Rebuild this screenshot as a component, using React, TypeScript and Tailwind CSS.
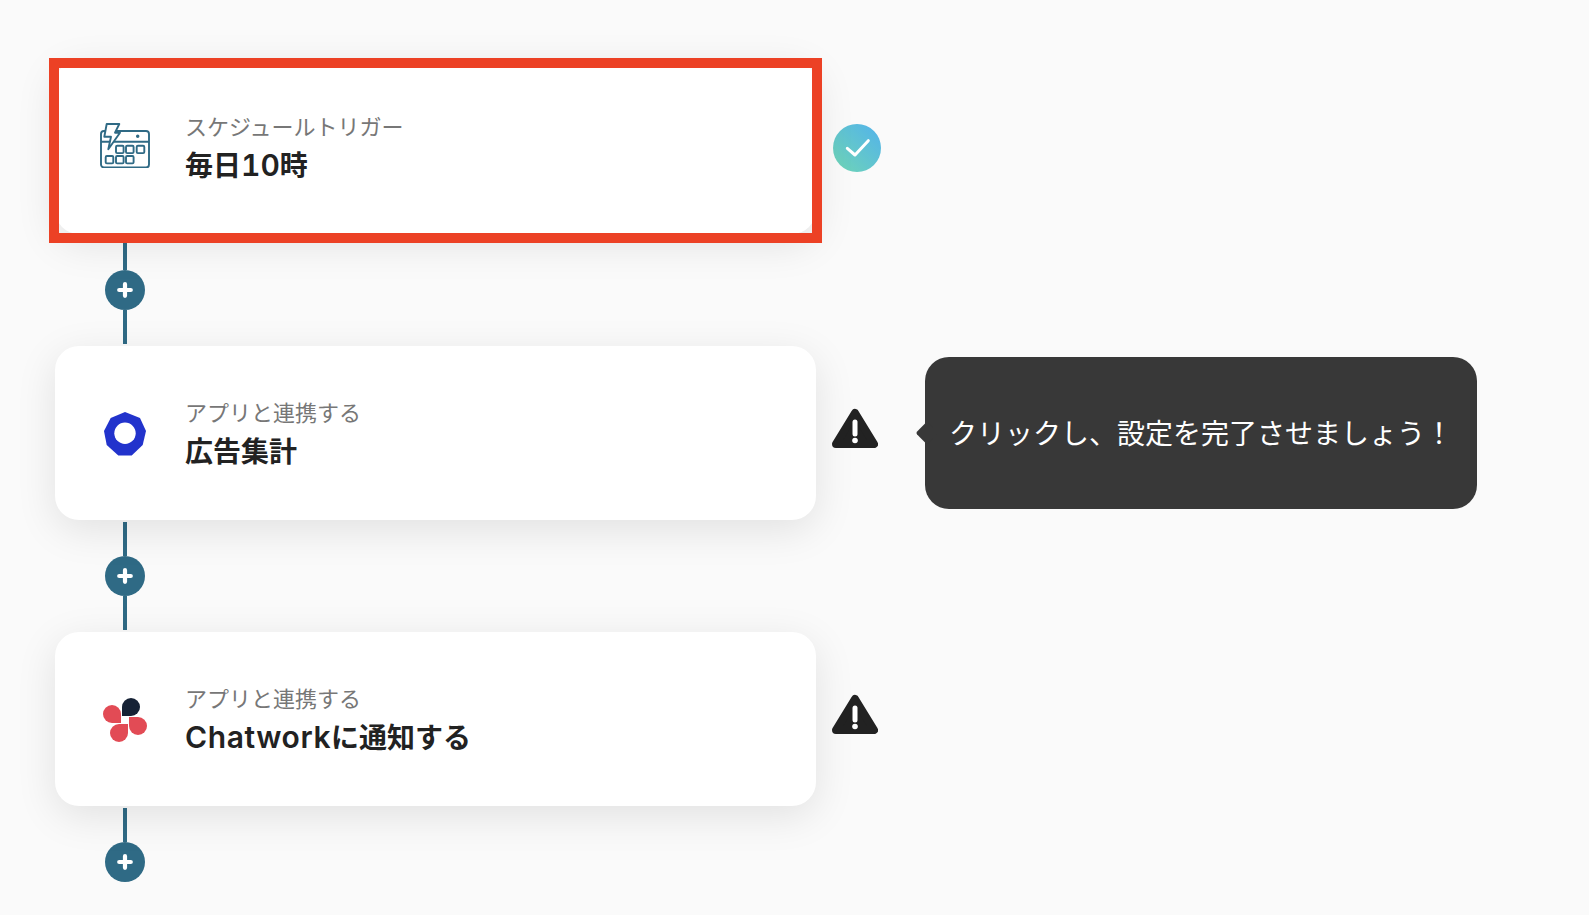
const cardFont = "font-['Inter','Noto_Sans_CJK_JP',sans-serif]";

function CalendarIcon() {
  return (
    <svg className="-mt-1" width="50" height="46" viewBox="0 0 50 46" fill="none" stroke="#2f6a85" strokeWidth="1.9" strokeLinejoin="round">
      <rect x="1" y="9" width="48" height="36.5" rx="3" />
      <path d="M1 19.7H49" />
      <circle cx="37.7" cy="14.3" r="0.8" fill="#2f6a85" />
      <rect x="16" y="23.7" width="7.6" height="7.4" rx="1.2" />
      <rect x="26" y="23.7" width="7.6" height="7.4" rx="1.2" />
      <rect x="36.7" y="23.7" width="7.6" height="7.4" rx="1.2" />
      <rect x="5.7" y="34" width="7.6" height="7.4" rx="1.2" />
      <rect x="16" y="34" width="7.6" height="7.4" rx="1.2" />
      <rect x="26" y="34" width="7.6" height="7.4" rx="1.2" />
      <path d="M6.7 2H19.3L15 10.7H20L8.3 27.3L11 14.7H4.3Z" fill="#fff" />
    </svg>
  );
}

function AdIcon() {
  return (
    <svg className="mt-[2px]" width="42" height="44" viewBox="0 0 42 44">
      <polygon points="21,0 36,6 42,19 38.7,33 27.7,43.5 14.3,43.5 2.7,33 0,19 6.7,6" fill="#2233cc" />
      <circle cx="21" cy="21.3" r="10.7" fill="#fff" />
    </svg>
  );
}

function ChatworkIcon() {
  return (
    <svg className="mt-[2px]" width="44" height="44" viewBox="0 0 44 44">
      <path d="M19 18V9A9 9 0 1 1 28 18Z" fill="#162235" />
      <path d="M18 25H9A9 9 0 1 1 18 16Z" fill="#e24b55" />
      <path d="M26 19H35A9 9 0 1 1 26 28Z" fill="#e24b55" />
      <path d="M25 26V35A9 9 0 1 1 16 26Z" fill="#e24b55" />
    </svg>
  );
}

function CheckBadge() {
  return (
    <svg width="48" height="48" viewBox="0 0 48 48" fill="none">
      <defs>
        <linearGradient id="checkGrad" x1="0" y1="1" x2="1" y2="0">
          <stop offset="0" stopColor="#70d6b4" />
          <stop offset="1" stopColor="#52b2ec" />
        </linearGradient>
      </defs>
      <circle cx="24" cy="24" r="24" fill="url(#checkGrad)" />
      <path d="M14.3 24.3L22 31L35.3 16.7" stroke="#fff" strokeWidth="3" strokeLinecap="round" strokeLinejoin="round" />
    </svg>
  );
}

function WarningIcon() {
  return (
    <svg width="46" height="41" viewBox="0 0 46 41">
      <path d="M23 5L42 36H4Z" fill="#222" stroke="#222" strokeWidth="8" strokeLinejoin="round" />
      <path d="M23 14V26" stroke="#fff" strokeWidth="5" strokeLinecap="round" />
      <circle cx="23" cy="32.5" r="2.8" fill="#fff" />
    </svg>
  );
}

function Connector({ last }: { last?: boolean }) {
  return (
    <div className="w-[140px] h-[112px] flex flex-col items-center pt-[2px]">
      <span className="w-1 h-[34px] bg-[#2f6a85]" />
      <button className="w-10 h-10 shrink-0 rounded-full bg-[#2f6a85] flex items-center justify-center">
        <svg width="16" height="16" viewBox="0 0 16 16">
          <path d="M2.2 8H13.8M8 2.2V13.8" stroke="#fff" strokeWidth="4.2" strokeLinecap="round" />
        </svg>
      </button>
      {!last && <span className="w-1 h-[34px] bg-[#2f6a85]" />}
    </div>
  );
}

function Card({ icon, label, title, active }: { icon: React.ReactNode; label: string; title: React.ReactNode; active?: boolean }) {
  return (
    <div className={`relative w-[761px] h-[174px] shrink-0 rounded-[24px] bg-white shadow-[0_10px_40px_rgba(0,0,0,0.1)] flex items-center ${cardFont}`}>
      <div className="w-[140px] flex justify-center">{icon}</div>
      <div className="flex flex-col -ml-[10px] mt-[3px]">
        <span className="text-[22px] leading-[35px] text-[#777]">{label}</span>
        <span className="text-[28px] leading-[42px] font-bold text-[#222]">{title}</span>
      </div>
      {active && <div className="absolute -left-[6px] -top-[2px] -right-[6px] -bottom-[9px] border-[10px] border-[#ec4125]" />}
    </div>
  );
}

export default function App() {
  return (
    <div className="min-h-[915px] bg-[#fafafa] pl-[55px] pt-[60px] overflow-hidden">
      <div className="flex items-center h-[174px]">
        <Card
          icon={<CalendarIcon />}
          label="スケジュールトリガー"
          title={<span className="relative -top-px">毎日<span className="text-[30px] font-semibold tabular-nums">10</span>時</span>}
          active
        />
        <div className="ml-[17px] mt-[2px]"><CheckBadge /></div>
      </div>
      <Connector />
      <div className="flex items-center h-[174px]">
        <Card icon={<AdIcon />} label="アプリと連携する" title="広告集計" />
        <div className="ml-4 -mt-[9px]"><WarningIcon /></div>
        <div className={`relative ml-[47px] w-[552px] h-[152px] pt-[2px] rounded-[24px] bg-[#383838] flex items-center justify-center text-white text-[28px] ${cardFont}`}>
          <span className="absolute -left-[6px] top-[68px] w-4 h-4 rotate-45 rounded-[2px] bg-[#383838]" />
          クリックし、設定を完了させましょう！
        </div>
      </div>
      <Connector />
      <div className="flex items-center h-[174px]">
        <Card
          icon={<ChatworkIcon />}
          label="アプリと連携する"
          title={<span className="relative -top-px"><span className="text-[30px] font-semibold tracking-[0.6px]">Chatwork</span>に通知する</span>}
        />
        <div className="ml-4 -mt-[9px]"><WarningIcon /></div>
      </div>
      <Connector last />
    </div>
  );
}
